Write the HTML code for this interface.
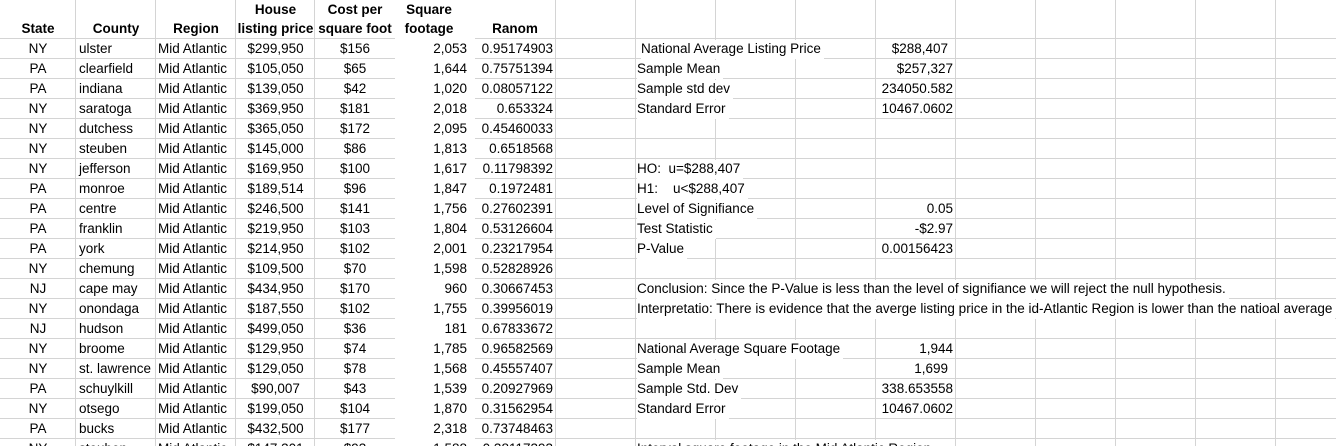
<!DOCTYPE html>
<html style="height:446px;overflow:hidden"><head><meta charset="utf-8"><style>
html,body{margin:0;width:1336px;height:446px;overflow:hidden}
body{background:#fff;position:relative;font-family:"Liberation Sans",Calibri,sans-serif;font-size:13.5px;color:#000}
.v{position:absolute;top:0;height:446px;width:1px;background:#d4d4d4}
.h{position:absolute;height:1px;background:#d4d4d4}
.r{position:absolute;left:0;width:1336px;height:20px;line-height:20px}
.r span{position:absolute;top:0;white-space:nowrap}
.a{left:0;width:76px;text-align:center}
.b{left:79px}
.c{left:158px}
.d{left:236px;width:79px;text-align:center}
.e{left:315px;width:80px;text-align:center}
.f{left:395px;width:72px;text-align:right}
.g{left:475px;width:78px;text-align:right}
.i{left:637px;top:1px!important;height:19px;background:#fff;padding-right:3px;line-height:18px}
.l{left:876px;width:77px;text-align:right}
.hd{position:absolute;top:0;font-weight:bold;text-align:center;line-height:19px}
</style></head><body>
<div class="v" style="left:75px"></div><div class="v" style="left:155px"></div><div class="v" style="left:235px"></div><div class="v" style="left:314px"></div>
<div class="v" style="left:555px"></div><div class="v" style="left:635px"></div><div class="v" style="left:715px"></div><div class="v" style="left:795px"></div><div class="v" style="left:875px"></div><div class="v" style="left:955px"></div><div class="v" style="left:1035px"></div><div class="v" style="left:1115px"></div><div class="v" style="left:1195px"></div><div class="v" style="left:1275px"></div>
<div style="position:absolute;left:395px;top:0;width:80px;height:446px;background:#fff"></div>
<div class="h" style="left:0;width:395px;top:38px"></div><div class="h" style="left:475px;width:861px;top:38px"></div>
<div class="h" style="left:0;width:395px;top:58px"></div><div class="h" style="left:475px;width:861px;top:58px"></div>
<div class="h" style="left:0;width:395px;top:78px"></div><div class="h" style="left:475px;width:861px;top:78px"></div>
<div class="h" style="left:0;width:395px;top:98px"></div><div class="h" style="left:475px;width:861px;top:98px"></div>
<div class="h" style="left:0;width:395px;top:118px"></div><div class="h" style="left:475px;width:861px;top:118px"></div>
<div class="h" style="left:0;width:395px;top:138px"></div><div class="h" style="left:475px;width:861px;top:138px"></div>
<div class="h" style="left:0;width:395px;top:158px"></div><div class="h" style="left:475px;width:861px;top:158px"></div>
<div class="h" style="left:0;width:395px;top:178px"></div><div class="h" style="left:475px;width:861px;top:178px"></div>
<div class="h" style="left:0;width:395px;top:198px"></div><div class="h" style="left:475px;width:861px;top:198px"></div>
<div class="h" style="left:0;width:395px;top:218px"></div><div class="h" style="left:475px;width:861px;top:218px"></div>
<div class="h" style="left:0;width:395px;top:238px"></div><div class="h" style="left:475px;width:861px;top:238px"></div>
<div class="h" style="left:0;width:395px;top:258px"></div><div class="h" style="left:475px;width:861px;top:258px"></div>
<div class="h" style="left:0;width:395px;top:278px"></div><div class="h" style="left:475px;width:861px;top:278px"></div>
<div class="h" style="left:0;width:395px;top:298px"></div><div class="h" style="left:475px;width:861px;top:298px"></div>
<div class="h" style="left:0;width:395px;top:318px"></div><div class="h" style="left:475px;width:861px;top:318px"></div>
<div class="h" style="left:0;width:395px;top:338px"></div><div class="h" style="left:475px;width:861px;top:338px"></div>
<div class="h" style="left:0;width:395px;top:358px"></div><div class="h" style="left:475px;width:861px;top:358px"></div>
<div class="h" style="left:0;width:395px;top:378px"></div><div class="h" style="left:475px;width:861px;top:378px"></div>
<div class="h" style="left:0;width:395px;top:398px"></div><div class="h" style="left:475px;width:861px;top:398px"></div>
<div class="h" style="left:0;width:395px;top:418px"></div><div class="h" style="left:475px;width:861px;top:418px"></div>
<div class="h" style="left:0;width:395px;top:438px"></div><div class="h" style="left:475px;width:861px;top:438px"></div>

<div class="hd" style="left:0;width:76px;top:19px">State</div>
<div class="hd" style="left:76px;width:80px;top:19px">County</div>
<div class="hd" style="left:156px;width:80px;top:19px">Region</div>
<div class="hd" style="left:236px;width:79px">House<br>listing price</div>
<div class="hd" style="left:315px;width:80px">Cost per<br>square foot</div>
<div class="hd" style="left:395px;width:68px">Square<br>footage</div>
<div class="hd" style="left:475px;width:80px;top:19px">Ranom</div>

<div class="r" style="top:39px"><span class="a">NY</span><span class="b">ulster</span><span class="c">Mid Atlantic</span><span class="d">$299,950</span><span class="e">$156</span><span class="f">2,053</span><span class="g">0.95174903</span><span class="i" style="left:641px">National Average Listing Price</span><span class="l" style="width:72px">$288,407</span></div>
<div class="r" style="top:59px"><span class="a">PA</span><span class="b">clearfield</span><span class="c">Mid Atlantic</span><span class="d">$105,050</span><span class="e">$65</span><span class="f">1,644</span><span class="g">0.75751394</span><span class="i">Sample Mean</span><span class="l">$257,327</span></div>
<div class="r" style="top:79px"><span class="a">PA</span><span class="b">indiana</span><span class="c">Mid Atlantic</span><span class="d">$139,050</span><span class="e">$42</span><span class="f">1,020</span><span class="g">0.08057122</span><span class="i">Sample std dev</span><span class="l">234050.582</span></div>
<div class="r" style="top:99px"><span class="a">NY</span><span class="b">saratoga</span><span class="c">Mid Atlantic</span><span class="d">$369,950</span><span class="e">$181</span><span class="f">2,018</span><span class="g">0.653324</span><span class="i">Standard Error</span><span class="l">10467.0602</span></div>
<div class="r" style="top:119px"><span class="a">NY</span><span class="b">dutchess</span><span class="c">Mid Atlantic</span><span class="d">$365,050</span><span class="e">$172</span><span class="f">2,095</span><span class="g">0.45460033</span></div>
<div class="r" style="top:139px"><span class="a">NY</span><span class="b">steuben</span><span class="c">Mid Atlantic</span><span class="d">$145,000</span><span class="e">$86</span><span class="f">1,813</span><span class="g">0.6518568</span></div>
<div class="r" style="top:159px"><span class="a">NY</span><span class="b">jefferson</span><span class="c">Mid Atlantic</span><span class="d">$169,950</span><span class="e">$100</span><span class="f">1,617</span><span class="g">0.11798392</span><span class="i">HO:&nbsp; u=$288,407</span></div>
<div class="r" style="top:179px"><span class="a">PA</span><span class="b">monroe</span><span class="c">Mid Atlantic</span><span class="d">$189,514</span><span class="e">$96</span><span class="f">1,847</span><span class="g">0.1972481</span><span class="i">H1:&nbsp;&nbsp;&nbsp; u&lt;$288,407</span></div>
<div class="r" style="top:199px"><span class="a">PA</span><span class="b">centre</span><span class="c">Mid Atlantic</span><span class="d">$246,500</span><span class="e">$141</span><span class="f">1,756</span><span class="g">0.27602391</span><span class="i">Level of Signifiance</span><span class="l">0.05</span></div>
<div class="r" style="top:219px"><span class="a">PA</span><span class="b">franklin</span><span class="c">Mid Atlantic</span><span class="d">$219,950</span><span class="e">$103</span><span class="f">1,804</span><span class="g">0.53126604</span><span class="i">Test Statistic</span><span class="l">-$2.97</span></div>
<div class="r" style="top:239px"><span class="a">PA</span><span class="b">york</span><span class="c">Mid Atlantic</span><span class="d">$214,950</span><span class="e">$102</span><span class="f">2,001</span><span class="g">0.23217954</span><span class="i">P-Value</span><span class="l">0.00156423</span></div>
<div class="r" style="top:259px"><span class="a">NY</span><span class="b">chemung</span><span class="c">Mid Atlantic</span><span class="d">$109,500</span><span class="e">$70</span><span class="f">1,598</span><span class="g">0.52828926</span></div>
<div class="r" style="top:279px"><span class="a">NJ</span><span class="b">cape may</span><span class="c">Mid Atlantic</span><span class="d">$434,950</span><span class="e">$170</span><span class="f">960</span><span class="g">0.30667453</span><span class="i">Conclusion: Since the P-Value is less than the level of signifiance we will reject the null hypothesis.</span></div>
<div class="r" style="top:299px"><span class="a">NY</span><span class="b">onondaga</span><span class="c">Mid Atlantic</span><span class="d">$187,550</span><span class="e">$102</span><span class="f">1,755</span><span class="g">0.39956019</span><span class="i">Interpretatio: There is evidence that the averge listing price in the id-Atlantic Region is lower than the natioal average</span></div>
<div class="r" style="top:319px"><span class="a">NJ</span><span class="b">hudson</span><span class="c">Mid Atlantic</span><span class="d">$499,050</span><span class="e">$36</span><span class="f">181</span><span class="g">0.67833672</span></div>
<div class="r" style="top:339px"><span class="a">NY</span><span class="b">broome</span><span class="c">Mid Atlantic</span><span class="d">$129,950</span><span class="e">$74</span><span class="f">1,785</span><span class="g">0.96582569</span><span class="i">National Average Square Footage</span><span class="l">1,944</span></div>
<div class="r" style="top:359px"><span class="a">NY</span><span class="b">st. lawrence</span><span class="c">Mid Atlantic</span><span class="d">$129,050</span><span class="e">$78</span><span class="f">1,568</span><span class="g">0.45557407</span><span class="i">Sample Mean</span><span class="l" style="width:72px">1,699</span></div>
<div class="r" style="top:379px"><span class="a">PA</span><span class="b">schuylkill</span><span class="c">Mid Atlantic</span><span class="d">$90,007</span><span class="e">$43</span><span class="f">1,539</span><span class="g">0.20927969</span><span class="i">Sample Std. Dev</span><span class="l">338.653558</span></div>
<div class="r" style="top:399px"><span class="a">NY</span><span class="b">otsego</span><span class="c">Mid Atlantic</span><span class="d">$199,050</span><span class="e">$104</span><span class="f">1,870</span><span class="g">0.31562954</span><span class="i">Standard Error</span><span class="l">10467.0602</span></div>
<div class="r" style="top:419px"><span class="a">PA</span><span class="b">bucks</span><span class="c">Mid Atlantic</span><span class="d">$432,500</span><span class="e">$177</span><span class="f">2,318</span><span class="g">0.73748463</span></div>
<div class="r" style="top:439px"><span class="a">NY</span><span class="b">steuben</span><span class="c">Mid Atlantic</span><span class="d">$147,301</span><span class="e">$93</span><span class="f">1,588</span><span class="g">0.38117393</span><span class="i">Interval square footage in the Mid Atlantic Region</span></div>
</body></html>
